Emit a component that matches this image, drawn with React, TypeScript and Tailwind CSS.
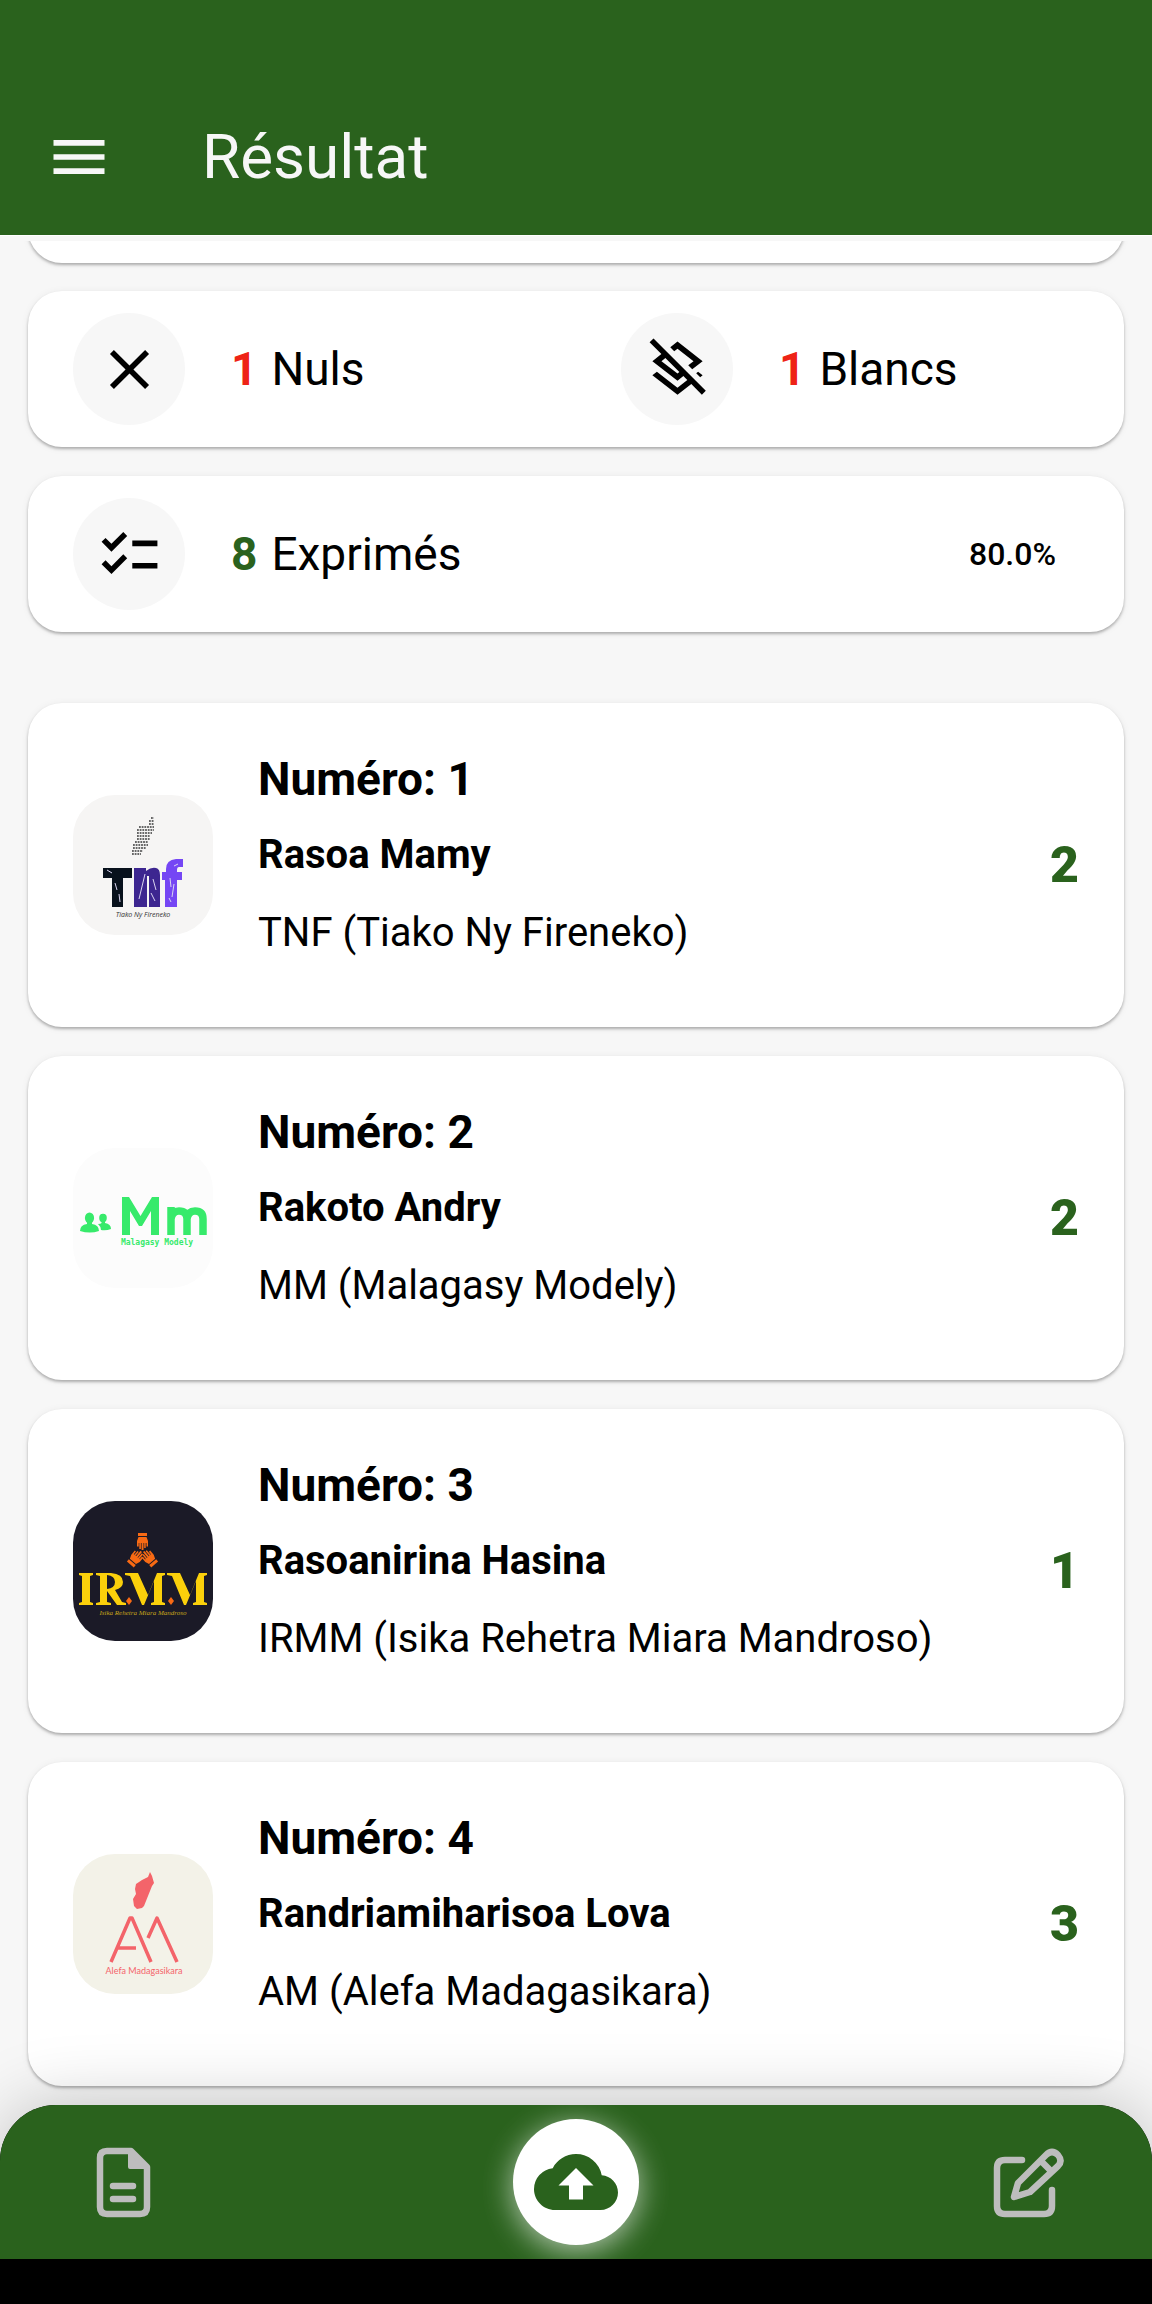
import { MdMenu, MdClose, MdChecklist, MdOutlineLayersClear, MdCloudUpload } from "react-icons/md";
import type { ReactNode } from "react";

const cardClass =
  "rounded-[34px] bg-white shadow-[0_2px_3px_rgba(0,0,0,0.28),0_1px_8px_rgba(0,0,0,0.06)]";

// Rows of the dotted island: y, first x, last x.
const dotRows: [number, number, number][] = [
  [23, 78, 81], [26, 76, 81], [29, 76, 81], [32, 66, 81], [35, 64, 81], [38, 64, 79],
  [41, 64, 77], [44, 64, 77], [47, 62, 75], [50, 60, 75], [53, 60, 73], [56, 59, 70],
  [59, 59, 68],
];

function TnfLogo() {
  return (
    <svg viewBox="0 0 140 140" className="size-full" role="img" aria-label="TNF">
      <rect width="140" height="140" fill="#f6f5f4" />
      {dotRows.map(([y, from, to]) => (
        <line key={y} x1={from} x2={to} y1={y} y2={y} stroke="#666" strokeWidth="1.8" strokeDasharray="1.8 0.9" />
      ))}
      <path d="M30 73h29v10h-9v29H39V83h-9z" fill="#08111c" />
      <path d="M61 73h12v3q5-4 10-3 4 1 4 7v32H76V81h-2v31H61z" fill="#3d2690" />
      <path d="M89 77h4v-3q0-9 10-10h7v8h-4q-2 0-2 3v2h5v8h-5v27H92V85h-3z" fill="#7546f4" />
      <path d="M34 75l5 3M42 88l2 7M46 99l1 8M66 104l6-25M80 84l3 11M78 98l4 8M97 83l1 9M101 89l-2 13M96 103l2 4M101 71l4-2" stroke="#d9d4ef" strokeWidth="1" fill="none" />
      <text x="70" y="122" textAnchor="middle" fontSize="7" fontStyle="italic" fill="#333" fontFamily="Open Sans, sans-serif">Tiako Ny Fireneko</text>
    </svg>
  );
}

function MmLogo() {
  return (
    <svg viewBox="0 0 140 140" className="size-full" role="img" aria-label="MM">
      <rect width="140" height="140" fill="#fcfcfc" />
      <g fill="#37ea6b">
        <ellipse cx="16.500" cy="70" rx="4.600" ry="5.500" />
        <path d="M7 83q0-6 7-7v-3h5v3q7 1 7 7-9 3-19 0z" />
        <ellipse cx="30" cy="70" rx="3.800" ry="4.200" />
        <path d="M25 76q3 0 3.500-1v-2h3.500v2q6 1 6 6-5 2-10 1-.5-4-3-6z" />
        <path d="M49 87V49h7l11.500 19L79 49h7v38h-8V63l-9 15h-3l-9-15v24z" />
      </g>
      <path d="M98 87V59M98 71q1-8 8-8 8 0 8 8v16M114 71q1-8 8-8 8 0 8 8v16" fill="none" stroke="#37ea6b" strokeWidth="7.500" />
      <text x="84" y="97" textAnchor="middle" fontSize="8" fontWeight="700" fill="#37ea6b" fontFamily="DejaVu Sans Mono, monospace">Malagasy Modely</text>
    </svg>
  );
}

function Hand() {
  return (
    <g>
      <path d="M-4.500-15h9v3h-9z" />
      <path d="M-4-11h8l1.500 4v5.500h-1.500V-5h-.8v5h-1.500v-5h-.7v7H-.9v-7h-.7v6h-1.600v-6h-.6v3.500h-1.700V-7z" />
    </g>
  );
}

function IrmmLogo() {
  return (
    <svg viewBox="0 0 140 140" className="size-full" role="img" aria-label="IRMM">
      <rect width="140" height="140" fill="#1b1a27" />
      <g fill="#f86a14">
        <g transform="translate(69.500 47)"><Hand /></g>
        <g transform="translate(67 52) rotate(-140)"><Hand /></g>
        <g transform="translate(72 52) rotate(140)"><Hand /></g>
        <path d="M56 96l3 4-3 4-3-4zM98 96l3 4-3 4-3-4z" />
      </g>
      <g fill="#fbd00b">
        <path d="M6 72h14v2l-3 1v26l3 1v2H6v-2l3-1V75l-3-1z" />
        <path d="M23 72h15q12 1 12 9 0 6-8 8l7 12 4 1v2h-9L34 90v11l4 1v2H23v-2l4-1V75l-4-1zm11 2v14q8-1 8-7t-8-7z" />
        <path d="M52 72h13l10 22 9-22h8v2l-3 1v26l3 1v2H78v-2l3-1V80L71 104h-2L57 75l-5-1z" />
        <path d="M94 72h13l10 22 9-22h8v2l-3 1v26l3 1v2h-14v-2l3-1V80l-10 24h-2L99 75l-5-1z" />
      </g>
      <text x="70" y="114" textAnchor="middle" fontSize="7" fontStyle="italic" fill="#c7a519" fontFamily="Liberation Serif, serif">Isika Rehetra Miara Mandroso</text>
    </svg>
  );
}

function AmLogo() {
  return (
    <svg viewBox="0 0 140 140" className="size-full" role="img" aria-label="AM">
      <rect width="140" height="140" fill="#f3f2e8" />
      <path d="M77 18l2 4 2 7-2 3-8 20-2 2-5 1-3-3-1-7 3-5-1-5 1-5 6-4 6-3z" fill="#f3646a" />
      <g fill="none" stroke="#f3646a" strokeWidth="3.500" strokeLinejoin="round">
        <path d="M38 108l19-44h2l19 44M44 94h19" />
        <path d="M75 84l9-20 20 44" />
      </g>
      <text x="71" y="120" textAnchor="middle" fontSize="9" fill="#f3646a" fontFamily="Lato, sans-serif">Alefa Madagasikara</text>
    </svg>
  );
}

const candidates = [
  { number: 1, name: "Rasoa Mamy", party: "TNF (Tiako Ny Fireneko)", votes: 2, logo: <TnfLogo /> },
  { number: 2, name: "Rakoto Andry", party: "MM (Malagasy Modely)", votes: 2, logo: <MmLogo /> },
  { number: 3, name: "Rasoanirina Hasina", party: "IRMM (Isika Rehetra Miara Mandroso)", votes: 1, logo: <IrmmLogo /> },
  { number: 4, name: "Randriamiharisoa Lova", party: "AM (Alefa Madagasikara)", votes: 3, logo: <AmLogo /> },
];

function Stat({ icon, value, label, valueClass }: { icon: ReactNode; value: number; label: string; valueClass: string }) {
  return (
    <div className="flex flex-1 items-center gap-[46px] px-[45px] py-[22px]">
      <span className="flex size-28 shrink-0 items-center justify-center rounded-full bg-[#f7f7f7]">{icon}</span>
      <p className="flex gap-[14px] text-[46px] leading-[52px]">
        <strong className={valueClass}>{value}</strong>
        <span>{label}</span>
      </p>
    </div>
  );
}

export default function App() {
  return (
    <div className="flex min-h-screen flex-col bg-[#f7f7f7] font-['Roboto',sans-serif] text-black">
      <header className="flex items-center gap-[89px] border-b border-white bg-[#2a621d] px-[45px] pt-[117px] pb-[38px] text-[#f7f7f7]">
        <button type="button" aria-label="Menu" className="shrink-0">
          <MdMenu className="size-[68px]" />
        </button>
        <h1 className="text-[62px] leading-[80px]">Résultat</h1>
      </header>

      <main className="flex-1 px-7 pt-[5px] pb-[19px]">
        <div className="-mx-2 overflow-hidden px-2 pb-2">
          <div className={`${cardClass} -mt-20 h-[102px]`} />
        </div>

        <section aria-label="Bulletins" className="mt-5 flex flex-col gap-[29px]">
          <div className={`${cardClass} flex`}>
            <Stat icon={<MdClose className="size-[67px]" />} value={1} label="Nuls" valueClass="text-[#ee2316]" />
            <Stat icon={<MdOutlineLayersClear className="size-[67px]" />} value={1} label="Blancs" valueClass="text-[#ee2316]" />
          </div>
          <div className={`${cardClass} flex items-center`}>
            <Stat icon={<MdChecklist className="size-[67px]" />} value={8} label="Exprimés" valueClass="text-[#2a621d]" />
            <span className="pr-[68px] text-[32px] leading-9 font-medium">80.0%</span>
          </div>
        </section>

        <ul className="mt-[71px] flex flex-col gap-[29px]">
          {candidates.map((c) => (
            <li key={c.number} className={`${cardClass} flex items-center gap-[45px] px-[45px]`}>
              <div className="size-[140px] shrink-0 overflow-hidden rounded-[42px]">{c.logo}</div>
              <div className="flex min-w-0 flex-1 flex-col gap-[22px] pt-[50px] pb-[66px]">
                <h2 className="text-[46px] leading-[52px] font-bold">Numéro: {c.number}</h2>
                <p className="text-[40px] leading-[56px] font-bold">{c.name}</p>
                <p className="text-[40px] leading-[56px]">{c.party}</p>
              </div>
              <strong className="text-[50px] leading-[60px] font-black text-[#2a621d]">{c.votes}</strong>
            </li>
          ))}
        </ul>
      </main>

      <nav aria-label="Navigation" className="relative rounded-t-[56px] bg-black pb-[45px] shadow-[0_0_70px_rgba(0,0,0,0.22)]">
        <div className="flex items-center justify-between overflow-hidden rounded-t-[56px] bg-[#2a621d] px-[81px] py-[14px]">
          <button type="button" aria-label="Document" className="text-[#bdbdbd]">
            <svg viewBox="0 0 84 84" className="size-[84px]" fill="none" stroke="currentColor" strokeWidth="6.5" strokeLinecap="round" strokeLinejoin="round">
              <path d="M50 11H26q-7 0-7 7v49q0 7 7 7h33q7 0 7-7V27zM32 46h20M32 59h20" />
              <path d="M49 12v15h16z" fill="currentColor" strokeWidth="4" />
            </svg>
          </button>
          <button type="button" aria-label="Envoyer" className="flex size-[126px] items-center justify-center rounded-full bg-white text-[#2a621d] shadow-[0_6px_30px_rgba(255,255,255,0.65)]">
            <MdCloudUpload className="size-[84px]" />
          </button>
          <button type="button" aria-label="Modifier" className="text-[#bdbdbd]">
            <svg viewBox="0 0 84 84" className="size-[84px]" fill="none" stroke="currentColor" strokeWidth="6.5" strokeLinecap="round" strokeLinejoin="round">
              <path d="M35 20H18q-8 0-8 8v38q0 8 8 8h39q8 0 8-8V50" />
              <path d="M27 57l4-14 28-28q6-6 12 0 5 6 0 11L43 52zM54 21l10 10" />
            </svg>
          </button>
        </div>
      </nav>
    </div>
  );
}
